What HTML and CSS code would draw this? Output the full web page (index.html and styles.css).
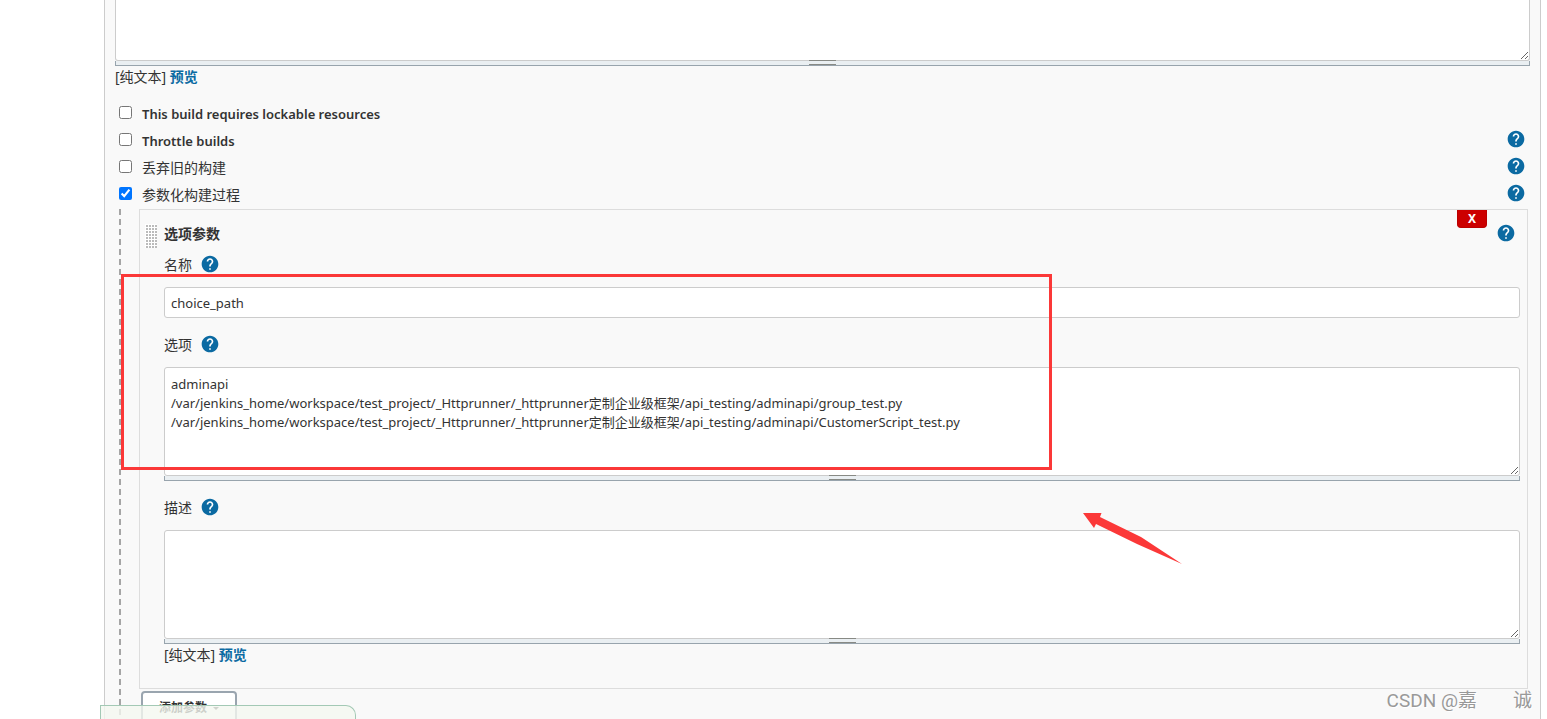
FILE: index.html
```html
<!DOCTYPE html>
<html lang="zh-CN">
<head>
<meta charset="utf-8">
<title>Jenkins</title>
<link rel="stylesheet" href="styles.css">
</head>
<body>
<svg class="sprite" aria-hidden="true">
  <symbol id="help" viewBox="0 0 24 24">
    <circle cx="12" cy="12" r="8" fill="#fff"/>
    <path fill="#0b6aa2" d="M12 2C6.48 2 2 6.48 2 12s4.48 10 10 10 10-4.48 10-10S17.52 2 12 2zm1 17h-2v-2h2v2zm2.07-7.75l-.9.92C13.45 12.9 13 13.5 13 15h-2v-.5c0-1.1.45-2.1 1.17-2.83l1.24-1.26c.37-.36.59-.86.59-1.41 0-1.1-.9-2-2-2s-2 .9-2 2H8c0-2.21 1.79-4 4-4s4 1.79 4 4c0 .88-.36 1.68-.93 2.25z"/>
  </symbol>
</svg>
<main class="panel">
  <textarea class="area area-top" aria-label="项目描述"></textarea>
  <div class="grip"></div>
  <div class="preview">[纯文本] <a href="#preview">预览</a></div>

  <div class="options">
    <div class="option">
      <input type="checkbox" id="lockable"><label class="latin" for="lockable">This build requires lockable resources</label>
    </div>
    <div class="option">
      <input type="checkbox" id="throttle"><label class="latin" for="throttle">Throttle builds</label>
      <button class="help" type="button" aria-label="帮助"><svg><use href="#help"/></svg></button>
    </div>
    <div class="option">
      <input type="checkbox" id="discard"><label for="discard">丢弃旧的构建</label>
      <button class="help" type="button" aria-label="帮助"><svg><use href="#help"/></svg></button>
    </div>
    <div class="option">
      <input type="checkbox" id="params" checked><label for="params">参数化构建过程</label>
      <button class="help" type="button" aria-label="帮助"><svg><use href="#help"/></svg></button>
    </div>
  </div>

  <div class="nested">
    <div class="rail"></div>
    <div class="nested-body">
      <section class="param">
        <header class="param-head">
          <span class="drag"></span>
          <h2 class="param-title">选项参数</h2>
          <button class="remove" type="button">X</button>
          <button class="help" type="button" aria-label="帮助"><svg><use href="#help"/></svg></button>
        </header>
        <div class="fields">
          <div class="field-label"><label for="name">名称</label><button class="help" type="button" aria-label="帮助"><svg><use href="#help"/></svg></button></div>
          <input class="text" id="name" type="text" value="choice_path">
          <div class="field-label"><label for="choices">选项</label><button class="help" type="button" aria-label="帮助"><svg><use href="#help"/></svg></button></div>
          <textarea class="area" id="choices" spellcheck="false">adminapi
/var/jenkins_home/workspace/test_project/_Httprunner/_httprunner定制企业级框架/api_testing/adminapi/group_test.py
/var/jenkins_home/workspace/test_project/_Httprunner/_httprunner定制企业级框架/api_testing/adminapi/CustomerScript_test.py</textarea>
          <div class="grip"></div>
          <div class="field-label"><label for="desc">描述</label><button class="help" type="button" aria-label="帮助"><svg><use href="#help"/></svg></button></div>
          <textarea class="area" id="desc"></textarea>
          <div class="grip"></div>
          <div class="preview">[纯文本] <a href="#preview">预览</a></div>
        </div>
      </section>
      <button class="add" type="button">添加参数<span class="caret"></span></button>
    </div>
  </div>
</main>

<div class="toast"></div>
<div class="mark-box"></div>
<svg class="mark-arrow" viewBox="0 0 100 52"><path fill="#fb3838" d="M0 0L18.500 0 17 4 58 24 99 51 54 31 13 11 11 15z"/></svg>
<div class="watermark"><span>CSDN @嘉</span><span>诚</span></div>
</body>
</html>
```
FILE: styles.css
```css
* { box-sizing: border-box; }

body {
  margin: 0;
  height: 100vh;
  overflow: hidden;
  position: relative;
  background: #fff;
  color: #333;
  font: 14px/20px "Noto Sans", "Noto Sans CJK SC", sans-serif;
}

button, input, textarea { font: inherit; color: inherit; }

.sprite { position: absolute; width: 0; height: 0; }

.panel {
  min-height: 100vh;
  margin: 0 6px 0 104px;
  padding: 0 10px;
  background: #f9f9f9;
  border: solid #ccc;
  border-width: 0 1px;
}

.area {
  display: block;
  width: 100%;
  height: 109px;
  margin: 0;
  padding: 7px 6px;
  border: 1px solid #ccc;
  border-radius: 3px;
  background: #fff;
  font-size: 13px;
  line-height: 19px;
  resize: vertical;
  overflow: hidden;
  outline: 0;
}
.area-top { height: 61px; border-top: 0; border-radius: 0 0 3px 3px; }

.grip {
  display: flex;
  justify-content: center;
  align-items: flex-end;
  height: 5px;
  background: #eaeff2;
  border: 1px solid #98a4ad;
  border-top: 0;
}
.grip::before {
  content: "";
  width: 27px;
  height: 3px;
  border: solid #888a85;
  border-width: 1px 0;
}

.preview { padding-top: 1px; }
.preview a { color: #0b6aa2; font-weight: 700; text-decoration: none; }

.options { padding: 13px 4px 1px; }
.option { display: flex; align-items: center; height: 27px; }
.option input { width: 13px; height: 13px; margin: 0 10px 2px 0; }
.option label { flex: 1; }
.option .latin { font-size: 13px; font-weight: 600; }
.option .help { margin-bottom: 3px; }

.help {
  display: block;
  width: 20px;
  height: 20px;
  padding: 0;
  border: 0;
  background: none;
}
.help svg { display: block; width: 20px; height: 20px; }

.nested { display: flex; padding: 0 2px 0 4px; }
.rail {
  width: 2px;
  background: repeating-linear-gradient(#a5a5a5 0 6px, transparent 6px 10px);
}
.nested-body { flex: 1; padding-left: 18px; }

.param {
  min-height: 480px;
  border: 1px solid #ddd;
}
.param-head { display: flex; height: 44px; padding: 0 11px 0 5px; }
.drag {
  width: 12px;
  height: 24px;
  margin: 14px 7px 0 0;
  background:
    linear-gradient(#fff 1px, transparent 1px) 0 0 / 3px 3px,
    linear-gradient(90deg, #fff 1px, transparent 1px) 0 0 / 3px 3px,
    #bbb;
}
.param-title { flex: 1; margin: 14px 0 0; font-size: 14px; line-height: 20px; }
.remove {
  width: 30px;
  height: 18px;
  margin-right: 9px;
  padding: 0;
  border: 1px solid #b00;
  border-top: 0;
  border-radius: 0 0 4px 4px;
  background: #c00;
  color: #fff;
  font-size: 12px;
  font-weight: 700;
  line-height: 16px;
}
.param-head .help { margin-top: 13px; }

.fields { padding: 0 7px 0 24px; }
.field-label { display: flex; align-items: center; gap: 8px; height: 20px; margin: 16px 0 13px; }
.field-label label { padding-top: 2px; }
.fields .field-label:first-child { margin-top: 0; }
.text {
  display: block;
  width: 100%;
  height: 31px;
  padding: 0 6px;
  border: 1px solid #ccc;
  border-radius: 3px;
  background: #fff;
  font-size: 13px;
  outline: 0;
}

.add {
  display: flex;
  align-items: center;
  gap: 6px;
  height: 34px;
  margin: 2px 0 0 2px;
  padding: 0 16px;
  border: 2px solid #9aa5af;
  border-radius: 4px;
  background: #fff;
  font-size: 12px;
  font-weight: 700;
}
.caret { border: 3px solid transparent; border-top-color: #444; border-bottom: 0; }

.toast {
  position: absolute;
  left: 100px;
  bottom: 0;
  width: 256px;
  height: 14px;
  border: 1px solid #a3c9b5;
  border-bottom: 0;
  border-radius: 0 10px 0 0;
  background: rgba(244, 248, 240, .8);
}

.mark-box {
  position: absolute;
  left: 121px;
  top: 274px;
  width: 931px;
  height: 196px;
  border: 3px solid #fb3838;
  pointer-events: none;
}
.mark-arrow { position: absolute; left: 1083px; top: 513px; width: 100px; height: 52px; }

.watermark {
  position: absolute;
  right: 15px;
  bottom: 6px;
  display: flex;
  gap: 36px;
  color: #999;
  font: 19px/24px Roboto, "Noto Sans CJK SC", sans-serif;
  text-shadow: 1px 1px 0 #fff;
}
```
